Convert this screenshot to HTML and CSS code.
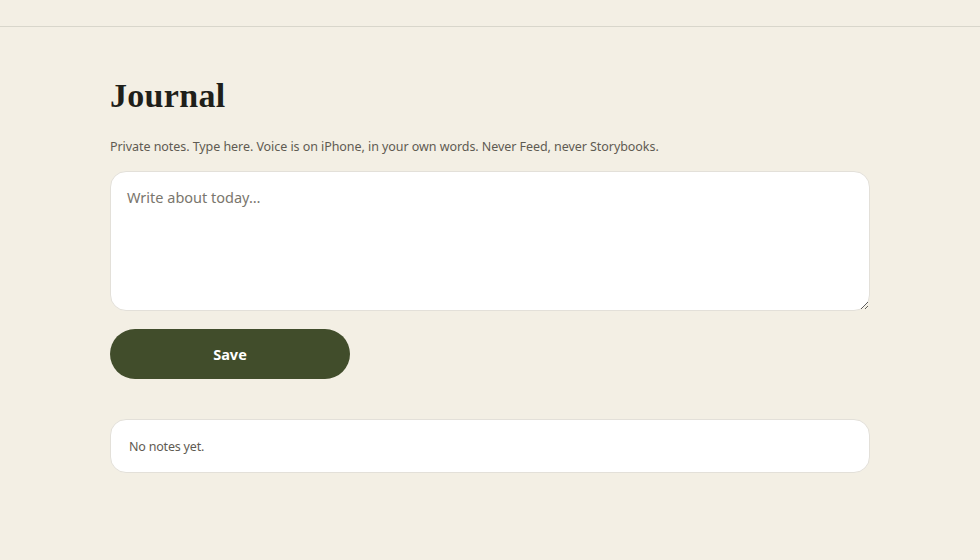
FILE: index.html
```html
<!DOCTYPE html>
<html lang="en">
<head>
<meta charset="utf-8">
<title>Journal</title>
<link rel="stylesheet" href="styles.css">
</head>
<body>
<header class="topbar"></header>
<main class="page">
  <h1 class="title">Journal</h1>
  <p class="subtitle">Private notes. Type here. Voice is on iPhone, in your own words. Never Feed, never Storybooks.</p>
  <textarea class="entry" placeholder="Write about today…"></textarea>
  <button class="save" type="button">Save</button>
  <section class="notes">
    <p class="empty">No notes yet.</p>
  </section>
</main>
</body>
</html>
```
FILE: styles.css
```css
* { box-sizing: border-box; }
html, body { margin: 0; padding: 0; }
body {
  background: #f3efe4;
  font-family: "Noto Sans", "Open Sans", sans-serif;
  color: #2a2a24;
  height: 560px;
}
.topbar {
  height: 27px;
  border-bottom: 1px solid #d8d6cb;
}
.page {
  width: 760px;
  margin: 0 auto;
  display: flex;
  flex-direction: column;
  align-items: flex-start;
  padding-top: 50px;
}
.title {
  margin: 0;
  font-family: "Liberation Serif", "Times New Roman", serif;
  font-weight: 700;
  font-size: 34px;
  line-height: 38px;
  letter-spacing: 0.3px;
  color: #1f1f1a;
}
.subtitle {
  margin: 23px 0 0;
  font-size: 12.5px;
  line-height: 18px;
  color: #5f5b52;
  letter-spacing: -0.06px;
}
.entry {
  display: block;
  margin-top: 15px;
  width: 760px;
  height: 140px;
  border: 1px solid #e3e0d9;
  border-radius: 16px;
  background: #fff;
  padding: 14px 16px;
  font-family: inherit;
  font-size: 14.5px;
  line-height: 22px;
  color: #2a2a24;
  resize: vertical;
  outline: none;
}
.entry::placeholder { color: #7a766d; }
.save {
  margin-top: 18px;
  width: 240px;
  height: 50px;
  border: none;
  border-radius: 25px;
  background: #414d2b;
  color: #fff;
  font-family: inherit;
  font-weight: 700;
  font-size: 14.5px;
  cursor: pointer;
}
.notes {
  margin-top: 40px;
  width: 760px;
  height: 54px;
  background: #fff;
  border: 1px solid #e3e0d9;
  border-radius: 16px;
  display: flex;
  align-items: center;
  padding: 0 18px;
}
.empty {
  margin: 0;
  font-size: 12.5px;
  color: #5f5b52;
  letter-spacing: -0.2px;
}
```
